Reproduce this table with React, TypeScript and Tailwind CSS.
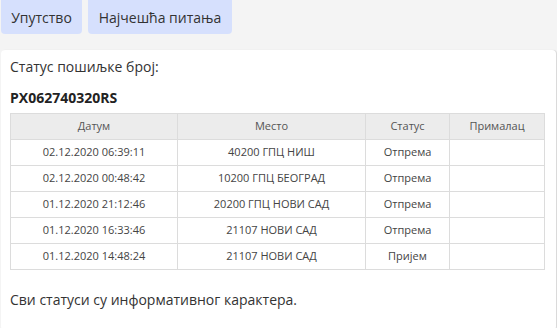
const rows = [
	{ date: "02.12.2020 06:39:11", place: "40200 ГПЦ НИШ", status: "Отпрема" },
	{ date: "02.12.2020 00:48:42", place: "10200 ГПЦ БЕОГРАД", status: "Отпрема" },
	{ date: "01.12.2020 21:12:46", place: "20200 ГПЦ НОВИ САД", status: "Отпрема" },
	{ date: "01.12.2020 16:33:46", place: "21107 НОВИ САД", status: "Отпрема" },
	{ date: "01.12.2020 14:48:24", place: "21107 НОВИ САД", status: "Пријем" },
];

function App() {
	return (
		<main className="h-[328px] w-[557px] overflow-hidden bg-[#f4f4f4] font-['Open_Sans',sans-serif] text-[#333]">
			<nav className="flex gap-[6px] px-px">
				<button className="h-[34px] w-[81px] rounded-b-[4px] bg-[#d6e0fd] text-[14px] text-[#333]">
					Упутство
				</button>
				<button className="h-[34px] w-[144px] rounded-b-[4px] bg-[#d6e0fd] text-[14px] text-[#333]">
					Најчешћа питања
				</button>
			</nav>

			<section className="mx-px mt-[16px] rounded-[4px] bg-white px-[9px] pt-[7px] pb-[20px] shadow-[1px_0_1px_rgba(0,0,0,0.12)]">
				<p className="text-[14px] leading-[20px]">Статус пошиљке број:</p>
				<p className="mt-[11px] text-[14px] leading-[20px] font-bold text-[#222]">PX062740320RS</p>

				<table className="mt-[5px] w-[535px] border-collapse text-center text-[11px] text-[#444]">
					<thead>
						<tr className="h-[26px] bg-[#ececec] text-[#555]">
							<th className="w-[167px] border border-[#dcdcdc] font-normal">Датум</th>
							<th className="w-[188px] border border-[#dcdcdc] font-normal">Место</th>
							<th className="w-[84px] border border-[#dcdcdc] font-normal">Статус</th>
							<th className="border border-[#dcdcdc] font-normal">Прималац</th>
						</tr>
					</thead>
					<tbody>
						{rows.map((r) => (
							<tr key={r.date} className="h-[26px]">
								<td className="border border-[#dcdcdc]">{r.date}</td>
								<td className="border border-[#dcdcdc]">{r.place}</td>
								<td className="border border-[#dcdcdc]">{r.status}</td>
								<td className="border border-[#dcdcdc]"></td>
							</tr>
						))}
					</tbody>
				</table>

				<p className="mt-[20px] text-[14px] leading-[20px]">Сви статуси су информативног карактера.</p>
			</section>
		</main>
	);
}

export default App;
